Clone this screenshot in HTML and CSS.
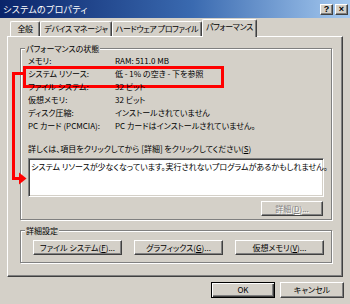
FILE: index.html
```html
<!DOCTYPE html>
<html lang="ja">
<head>
    <meta charset="UTF-8">
    <meta name="viewport" content="width=device-width, initial-scale=1.0">
    <title>システムのプロパティ</title>
    <link rel="stylesheet" href="styles.css">
</head>
<body>
    <div class="window">
        <div class="titlebar">
            <span class="title">システムのプロパティ</span>
            <div class="caption-btns">
                <span class="caption-btn">?</span>
                <span class="caption-btn">×</span>
            </div>
        </div>

        <div class="tabs">
            <span class="tab tab-general">全般</span>
            <span class="tab tab-device">デバイス マネージャ</span>
            <span class="tab tab-hw">ハードウェア プロファイル</span>
            <span class="tab tab-perf active">パフォーマンス</span>
        </div>

        <div class="panel">
            <div class="group group-status">
                <span class="group-label">パフォーマンスの状態</span>
                <div class="info">
                    <div class="info-row"><span class="key">メモリ:</span><span>RAM: 511.0 MB</span></div>
                    <div class="info-row marked"><span class="key">システム リソース:</span><span>低 - 1% の空き - 下を参照</span></div>
                    <div class="info-row"><span class="key">ファイル システム:</span><span>32 ビット</span></div>
                    <div class="info-row"><span class="key">仮想メモリ:</span><span>32 ビット</span></div>
                    <div class="info-row"><span class="key">ディスク圧縮:</span><span>インストールされていません</span></div>
                    <div class="info-row"><span class="key">PC カード (PCMCIA):</span><span>PC カードはインストールされていません。</span></div>
                </div>
                <p class="hint">詳しくは、項目をクリックしてから [詳細] をクリックしてください(<u>S</u>)</p>
                <div class="msgbox">システム リソースが少なくなっています。実行されないプログラムがあるかもしれません。</div>
                <div class="detail-row">
                    <button class="btn btn-detail" disabled>詳細(<u>D</u>)...</button>
                </div>
            </div>

            <div class="group group-adv">
                <span class="group-label">詳細設定</span>
                <div class="adv-row">
                    <button class="btn btn-adv">ファイル システム(<u>F</u>)...</button>
                    <button class="btn btn-adv">グラフィックス(<u>G</u>)...</button>
                    <button class="btn btn-adv">仮想メモリ(<u>V</u>)...</button>
                </div>
            </div>
        </div>

        <div class="footer">
            <button class="btn btn-foot default">OK</button>
            <button class="btn btn-foot">キャンセル</button>
        </div>

        <!-- annotation arrow from the marked row down to the message box -->
        <svg class="arrow" width="30" height="190" viewBox="0 0 30 190">
            <polyline points="23,73.5 13.5,73.5 13.5,178.5 20,178.5" fill="none" stroke="#f00" stroke-width="3"/>
            <polygon points="19,172.5 26.5,178.5 19,184.5" fill="#f00"/>
        </svg>
    </div>
</body>
</html>
```

FILE: styles.css
```css
* { box-sizing: border-box; }
body { margin: 0; background: #d4d0c8; font-family: "Noto Sans CJK JP", "Liberation Sans", sans-serif; font-size: 8px; line-height: 13px; font-feature-settings: "palt"; color: #000; }
u { text-decoration: underline; }

.window { position: relative; width: 350px; height: 304px; padding: 0 2px; overflow: hidden; }

.titlebar { display: flex; align-items: center; justify-content: space-between; height: 18px; margin: 0 -2px; padding: 0 2px 0 3px; background: linear-gradient(to right, #0a246a, #3a6ab0 55%, #a6caf0); color: #fff; }
.title { font-size: 9px; letter-spacing: 0.3px; }
.caption-btns { display: flex; gap: 2px; }
.caption-btn { width: 13px; height: 11px; background: #d4d0c8; color: #000; border: 1px solid; border-color: #fff #404040 #404040 #fff; box-shadow: inset -1px -1px #808080; font-family: "Liberation Sans", sans-serif; font-weight: bold; font-size: 9px; line-height: 9px; text-align: center; }

.tabs { display: flex; align-items: flex-end; height: 18px; padding-left: 8px; }
.tab { position: relative; height: 15px; border: 1px solid; border-bottom: none; border-color: #fff #404040 #fff #fff; box-shadow: inset -1px 0 #808080; border-radius: 2px 2px 0 0; text-align: center; line-height: 13px; letter-spacing: -0.4px; white-space: nowrap; }
.tab-general { width: 30px; }
.tab-device { width: 72px; }
.tab-hw { width: 90px; }
.tab-perf { width: 55px; }
.tab.active { z-index: 1; height: 18px; margin-bottom: -1px; background: #d4d0c8; line-height: 14px; }

.panel { width: 336px; height: 241px; margin-left: 5px; padding: 11px 0 0 12px; border: 1px solid; border-color: #fff #404040 #404040 #fff; box-shadow: inset -1px -1px #808080; }

.group { width: 312px; border: 1px solid #808080; box-shadow: inset 1px 1px #fff, 1px 1px #fff; padding: 0 7px 0 7px; }
.group-label { display: block; width: max-content; margin: -6px 0 0 -3px; padding: 0 1px; height: 11px; line-height: 11px; background: #d4d0c8; }
.group-status { height: 172px; }
.group-adv { height: 33px; margin-top: 10px; padding-left: 12px; }
.group-adv .group-label { margin-left: -8px; }

.info { margin-top: 0; }
.info-row { position: relative; display: flex; height: 13px; white-space: nowrap; }
.key { width: 87px; }
.marked::after { content: ""; position: absolute; left: -5px; top: -1px; width: 195px; height: 16px; border: 3px solid #f00; }

.hint { margin: 10px 0 0; white-space: nowrap; }
.msgbox { width: 296px; height: 39px; margin-top: 3px; padding: 1px 2px; background: #fff; border: 1px solid; border-color: #808080 #fff #fff #808080; box-shadow: inset 1px 1px #404040, inset -1px -1px #d4d0c8; white-space: nowrap; }
.detail-row { display: flex; justify-content: flex-end; width: 296px; margin-top: 4px; padding-right: 1px; }

.btn { height: 15px; padding: 0; background: #d4d0c8; border: 1px solid; border-color: #fff #404040 #404040 #fff; box-shadow: inset -1px -1px #808080; font: inherit; line-height: 12px; color: #000; white-space: nowrap; }
.btn:disabled { color: #808080; text-shadow: 1px 1px #fff; }
.btn-detail { width: 62px; }

.adv-row { display: flex; gap: 12px; margin-top: 4px; }
.btn-adv { width: 89px; }

.footer { display: flex; justify-content: flex-end; gap: 5px; margin-top: 5px; padding-right: 4px; }
.btn-foot { width: 64px; height: 16px; }
.btn-foot.default { border-color: #000; box-shadow: inset 1px 1px #fff, inset -1px -1px #404040, inset -2px -2px #808080; }

.arrow { position: absolute; left: 0; top: 0; pointer-events: none; }
```
